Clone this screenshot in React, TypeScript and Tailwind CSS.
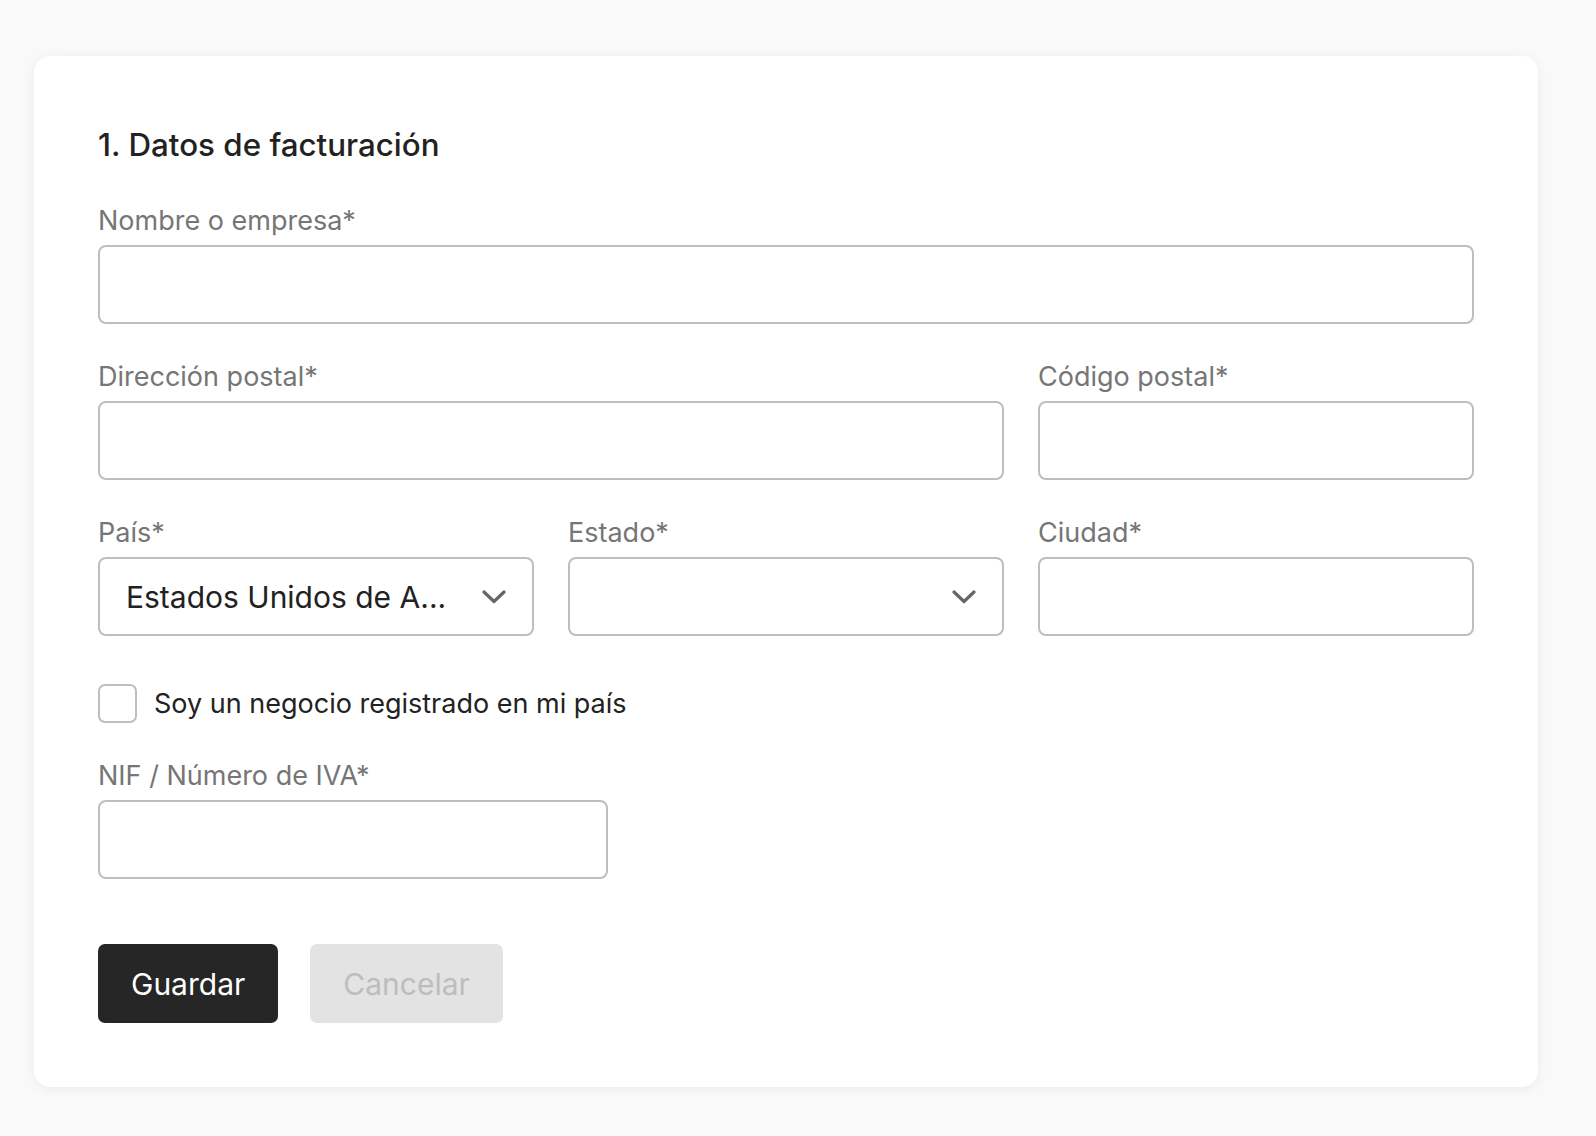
import React from "react";

function Label({ children }: { children: React.ReactNode }) {
  return (
    <div className="text-[27px] leading-[32px] text-[#767676] mb-[8px] whitespace-nowrap">{children}</div>
  );
}

function TextInput() {
  return <div className="h-[79px] w-full rounded-[8px] border-2 border-[#bebebe] bg-white" />;
}

function Chevron() {
  return (
    <svg width="24" height="14" viewBox="0 0 24 14" fill="none" className="shrink-0">
      <polyline points="2,2 12,11.5 22,2" stroke="#666666" strokeWidth="3.2" strokeLinecap="round" strokeLinejoin="round" />
    </svg>
  );
}

function Select({ value, title }: { value?: string; title?: string }) {
  return (
    <div
      title={title}
      className="h-[79px] w-full rounded-[8px] border-2 border-[#bebebe] bg-white flex items-center pl-[26px] pr-[26px] gap-[20px]"
    >
      <div className="flex-1 min-w-0 whitespace-nowrap text-[30px] leading-[36px] text-[#222222]">{value ?? ""}</div>
      <Chevron />
    </div>
  );
}

export default function App() {
  return (
    <div
      className="min-h-screen bg-[#f9f9f9] pt-[56px] pl-[34px] pb-[48px]"
      style={{ fontFamily: "Inter, 'Noto Sans', sans-serif" }}
    >
      <div className="w-[1504px] rounded-[16px] bg-white shadow-[0_2px_12px_rgba(0,0,0,0.06)] px-[64px] pt-[69px] pb-[64px]">
        <h2 className="text-[31.3px] leading-[40px] font-medium text-[#222222] mb-[40px]">1. Datos de facturación</h2>

        <div className="flex flex-col gap-[37px]">
          <div>
            <Label>Nombre o empresa*</Label>
            <TextInput />
          </div>

          <div className="grid grid-cols-3 gap-x-[34px]">
            <div className="col-span-2">
              <Label>Dirección postal*</Label>
              <TextInput />
            </div>
            <div>
              <Label>Código postal*</Label>
              <TextInput />
            </div>
          </div>

          <div className="grid grid-cols-3 gap-x-[34px]">
            <div>
              <Label>País*</Label>
              <Select value="Estados Unidos de A..." title="Estados Unidos de América" />
            </div>
            <div>
              <Label>Estado*</Label>
              <Select />
            </div>
            <div>
              <Label>Ciudad*</Label>
              <TextInput />
            </div>
          </div>
        </div>

        <label className="mt-[48px] flex items-center gap-[17px] w-fit">
          <span className="w-[39px] h-[39px] rounded-[7px] border-2 border-[#bebebe] bg-white" />
          <span className="text-[27px] leading-[34px] text-[#222222]">Soy un negocio registrado en mi país</span>
        </label>

        <div className="mt-[37px] w-[510px]">
          <Label>NIF / Número de IVA*</Label>
          <TextInput />
        </div>

        <div className="mt-[65px] flex gap-[32px]">
          <button className="h-[79px] px-[33px] rounded-[7px] bg-[#262626] text-white text-[30px] leading-[36px]">
            Guardar
          </button>
          <button className="h-[79px] px-[33px] rounded-[7px] bg-[#e3e3e3] text-[#bdbdbd] text-[30px] leading-[36px]">
            Cancelar
          </button>
        </div>
      </div>
    </div>
  );
}
